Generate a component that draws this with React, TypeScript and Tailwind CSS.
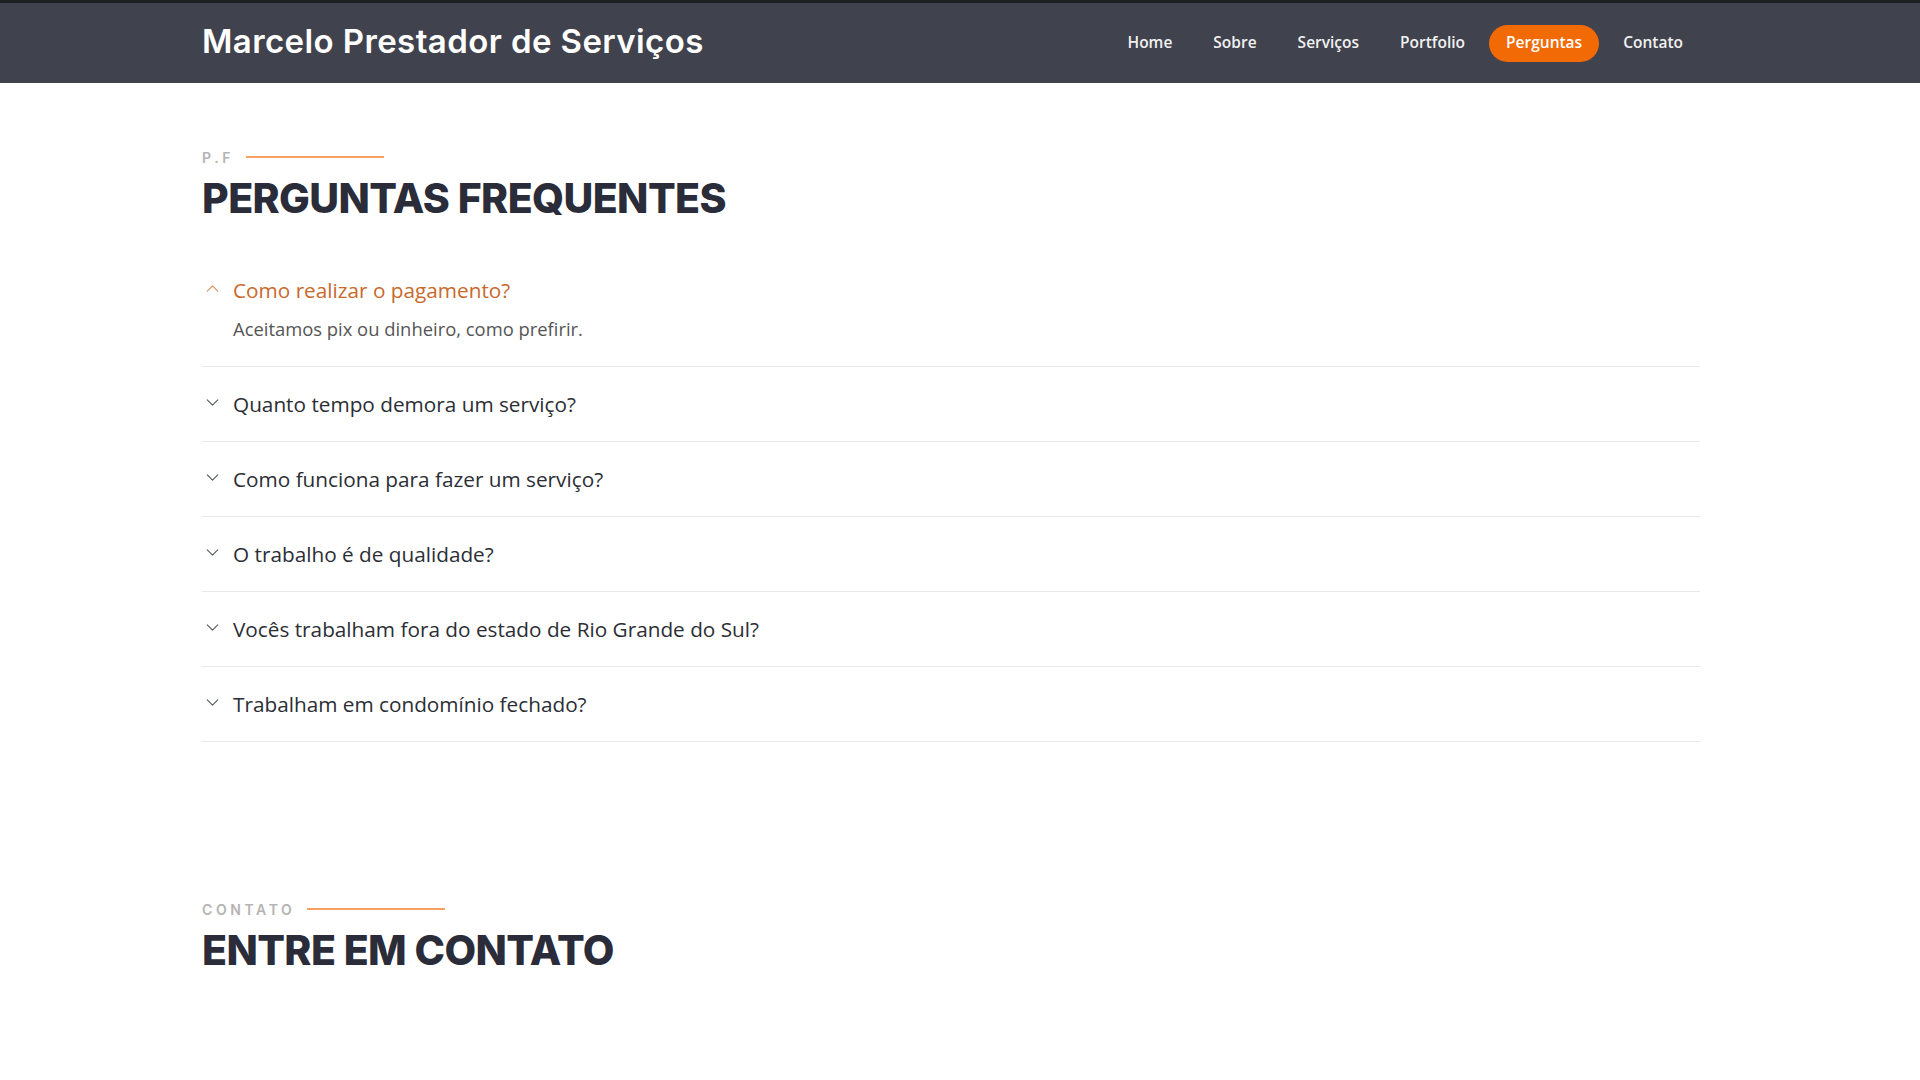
import React, { useState } from 'react';
import { ChevronDown, ChevronUp } from "lucide-react";

const links = ["Home", "Sobre", "Serviços", "Portfolio", "Perguntas", "Contato"];

const faqs = [
    { q: "Como realizar o pagamento?", a: "Aceitamos pix ou dinheiro, como prefirir." },
    { q: "Quanto tempo demora um serviço?", a: "Depende do serviço, combinamos o prazo antes de começar." },
    { q: "Como funciona para fazer um serviço?", a: "Entre em contato, fazemos o orçamento e agendamos a visita." },
    { q: "O trabalho é de qualidade?", a: "Sim, todos os serviços são feitos com cuidado e bons materiais." },
    { q: "Vocês trabalham fora do estado de Rio Grande do Sul?", a: "No momento atendemos apenas no Rio Grande do Sul." },
    { q: "Trabalham em condomínio fechado?", a: "Sim, basta liberar a entrada com a portaria." },
];

const SectionTitle = ({ label, title }: { label: string; title: string }) => (
    <div>
        <div className="flex items-center gap-[12px] h-5">
            <span className="text-[14px] font-semibold tracking-[3.6px] text-[#b4b4b4] font-['Inter',sans-serif]">{label}</span>
            <span className="block w-[138px] h-[2px] bg-[#f7a063]" />
        </div>
        <h2 className="mt-[6px] text-[41px] leading-[50px] font-extrabold text-[#2a2c39] font-['Inter',sans-serif] tracking-[-0.6px]">
            {title}
        </h2>
    </div>
);

const App = () => {
    const [open, setOpen] = useState<number | null>(0);

    return (
        <div className="min-h-screen bg-white font-['Open_Sans',sans-serif]">
            <header className="h-[83px] bg-[#40424d] border-t-[3px] border-[#1d2023]">
                <div className="ml-[202px] w-[1498px] h-full flex items-center justify-between">
                    <h1 className="text-white text-[33px] font-semibold font-['Inter',sans-serif] tracking-[0.4px] pb-[2px]">
                        Marcelo Prestador de Serviços
                    </h1>
                    <nav className="flex items-center gap-[7px]">
                        {links.map((l) => (
                            <a
                                key={l}
                                href="#"
                                className={`px-[17px] h-[37px] flex items-center rounded-full text-[15.5px] font-semibold ${l === "Perguntas" ? "bg-[#f26a06] text-white" : "text-[#f1f1f1]"}`}
                            >
                                {l}
                            </a>
                        ))}
                    </nav>
                </div>
            </header>

            <main className="ml-[202px] w-[1498px]">
                <section className="pt-[64px]">
                    <SectionTitle label="P.F" title="PERGUNTAS FREQUENTES" />

                    <div className="mt-[30px]">
                        {faqs.map((f, i) => (
                            <div key={i} className="border-b border-[#e8e8e8]">
                                <button
                                    className="w-full flex items-center text-left pt-[23px] pb-[23px]"
                                    onClick={() => setOpen(open === i ? null : i)}
                                >
                                    <span className="w-[31px] flex items-center -mt-[4px]">
                                        {open === i ? (
                                            <ChevronUp className="w-[21px] h-[21px] text-[#e0915e]" strokeWidth={1.3} />
                                        ) : (
                                            <ChevronDown className="w-[21px] h-[21px] text-[#555b63]" strokeWidth={1.3} />
                                        )}
                                    </span>
                                    <span className={`text-[20.75px] leading-[28px] ${open === i ? "text-[#c8692c]" : "text-[#2b2e35]"}`}>
                                        {f.q}
                                    </span>
                                </button>
                                {open === i && (
                                    <p className="pl-[31px] -mt-[11px] pb-[24px] text-[18.4px] leading-[26px] text-[#555]">
                                        {f.a}
                                    </p>
                                )}
                            </div>
                        ))}
                    </div>
                </section>

                <section className="pt-[157px] pb-[80px]">
                    <SectionTitle label="CONTATO" title="ENTRE EM CONTATO" />
                </section>
            </main>
        </div>
    );
};

export default App;
